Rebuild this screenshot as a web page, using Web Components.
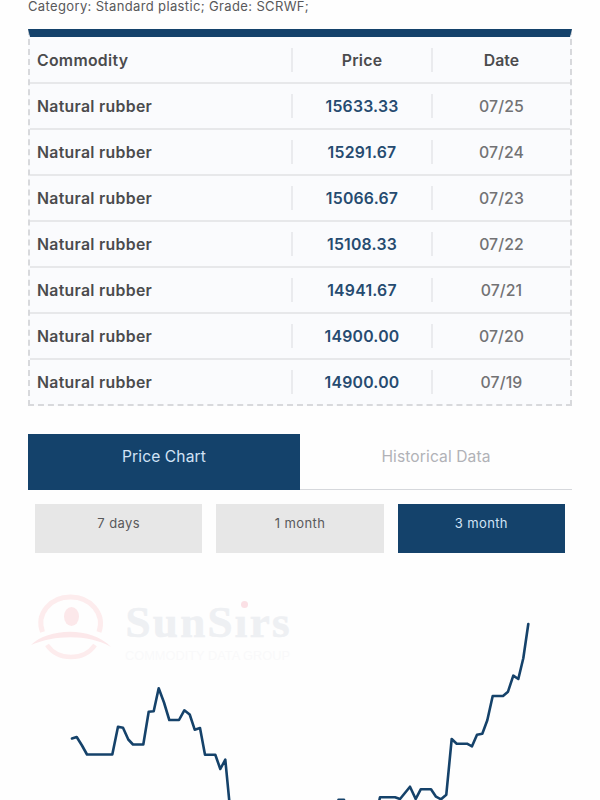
<!DOCTYPE html>
<html lang="en"><head><meta charset="utf-8"><title>Natural rubber price</title>
<style>
html,body{margin:0;background:#fefefe}
body{width:600px;height:800px;overflow:hidden;font-family:Inter,"Liberation Sans",sans-serif;color:#4b4b4d}
</style></head><body>
<commodity-page></commodity-page>
<script>
const define=(name,html,setup)=>customElements.define(name,class extends HTMLElement{
  connectedCallback(){
    if(this.shadowRoot)return;
    const t=document.createElement('template');t.innerHTML=html;
    this.attachShadow({mode:'open'}).append(t.content.cloneNode(true));
    if(setup)setup(this);
  }
});
define('price-row',`<style>
:host{display:grid;grid-template-columns:261px 140px 1fr;height:44px;border-bottom:2px solid #e7e8ea;align-items:center;font-size:15.8px;line-height:26px;letter-spacing:.3px;font-weight:600}
:host([last]){border-bottom:0}
.c,.p,.d{height:24px;box-sizing:border-box}
.c{padding-left:7px}.p,.d{text-align:center;border-left:2px solid #eaebee}
.p{color:#264b70;letter-spacing:.22px}.d{color:#727274;font-weight:500;letter-spacing:.1px}
:host([head]) .p,:host([head]) .d{color:#4b4b4d;font-weight:600}
</style><div class="c"><slot name="name"></slot></div><div class="p"><slot name="price"></slot></div><div class="d"><slot name="date"></slot></div>`);
define('price-table',`<style>
:host{display:block;box-sizing:border-box;width:544px;height:377px;padding-top:1px;background:#fafbfd;border:2px dashed #d8d9dc;border-top:8px solid #14426b}
</style><slot></slot>`,h=>{
  const rows=[['Commodity','Price','Date'],...[['15633.33','07/25'],['15291.67','07/24'],['15066.67','07/23'],['15108.33','07/22'],['14941.67','07/21'],['14900.00','07/20'],['14900.00','07/19']].map(r=>['Natural rubber',...r])];
  h.innerHTML=rows.map((r,i)=>`<price-row ${i?'':'head'} ${i==7?'last':''}><span slot="name">${r[0]}</span><span slot="price">${r[1]}</span><span slot="date">${r[2]}</span></price-row>`).join('');
});
define('chart-tab',`<style>
:host{display:block;flex:1;box-sizing:border-box;height:56px;padding-top:10px;text-align:center;font-size:15.6px;line-height:26px;letter-spacing:.1px;color:#b1b2b7;border-bottom:1.5px solid #d6d8dc}
:host([active]){background:#14426b;color:#d1e3f6;border-color:#14426b}
</style><slot></slot>`);
define('range-button',`<style>
:host{display:block;flex:1;box-sizing:border-box;height:49px;padding-top:8px;text-align:center;font-size:13px;line-height:23px;letter-spacing:.4px;color:#59595b;background:#e7e7e7}
:host([active]){background:#14426b;color:#d1e3f6}
</style><slot></slot>`);
define('sun-logo',`<style>:host{display:contents}</style><svg width="272" height="76" viewBox="28 590 272 76" fill="none">
<path d="M42.500 632C36 614 50 597 70.500 597S105 614 99 632" stroke="#fdeced" stroke-width="5"/>
<path d="M47 645C58 661 84 661 95 645" stroke="#fdeced" stroke-width="4.500"/>
<path d="M31 645C48 628 91 626 111 647C88 634 55 635 31 645Z" fill="#fce8ea"/>
<ellipse cx="71.500" cy="616.500" rx="7.500" ry="9.500" fill="#fce8ea"/>
<text x="125.500" y="637" font-family="Liberation Serif,serif" font-weight="700" font-size="45" textLength="164" fill="#eef0f3" stroke="#eef0f3" stroke-width=".6">SunSırs</text>
<circle cx="244.500" cy="604.500" r="3.500" fill="#fbe0e5"/>
<text x="125" y="660" font-family="Liberation Sans,sans-serif" font-size="12" textLength="165" lengthAdjust="spacingAndGlyphs" fill="#f9f9fa">COMMODITY DATA GROUP</text>
</svg>`);
define('price-chart',`<style>
:host{display:grid;width:600px;height:220px;overflow:hidden}
.logo,.line{grid-area:1/1}.logo{padding:10px 0 0 28px}.line{display:block}
</style><div class="logo"><sun-logo></sun-logo></div>
<svg class="line" width="600" height="220" viewBox="0 580 600 220"><polyline fill="none" stroke="#15426a" stroke-width="2.600" stroke-linejoin="round" stroke-linecap="round" points="72,738.5 76.7,737 82,745.5 87,754.5 112.3,754.5 118,726.7 123,727.7 128.3,739.5 133,744.5 143.3,744.5 148.7,711.7 153.7,711.3 158.7,688.3 164,702.5 169.3,720 179,720 184.3,710.3 189.700,714.5 194.700,729.7 200,728 205,754.7 215.3,754.7 220.3,769 225.3,759.7 229.3,801 232,830 334,830 338.500,799.7 344,799.7 349,825 374,825 380,797.3 395,797.3 400,799 410,786.7 415.7,799 420.7,789.3 431,789.3 436,796.7 441,799.3 446.3,794.7 451.7,739 456.7,743.7 467,743.7 472,746.3 477,734.7 482.3,733.7 487.3,720.3 492.7,696 503,696 508,691.7 513.3,675.7 518.3,679 523.3,658.3 528.3,624"/></svg>`);
define('commodity-page',`<style>
:host{display:flex;flex-direction:column;width:600px;height:800px;overflow:hidden}
.cat{height:29px;padding-left:28px;font-size:13px;line-height:13px;letter-spacing:.36px;color:#58585a;box-sizing:border-box}
price-table{margin-left:28px;flex:none}
.tabs{display:flex;margin:28px 28px 0}
.ranges{display:flex;gap:14px;margin:14px 35px 0;height:49px}
price-chart{margin-top:27px;flex:none}
</style>
<div class="cat">Category: Standard plastic; Grade: SCRWF;</div>
<price-table></price-table>
<div class="tabs"><chart-tab active>Price Chart</chart-tab><chart-tab>Historical Data</chart-tab></div>
<div class="ranges"><range-button>7 days</range-button><range-button>1 month</range-button><range-button active>3 month</range-button></div>
<price-chart></price-chart>`);
</script></body></html>
